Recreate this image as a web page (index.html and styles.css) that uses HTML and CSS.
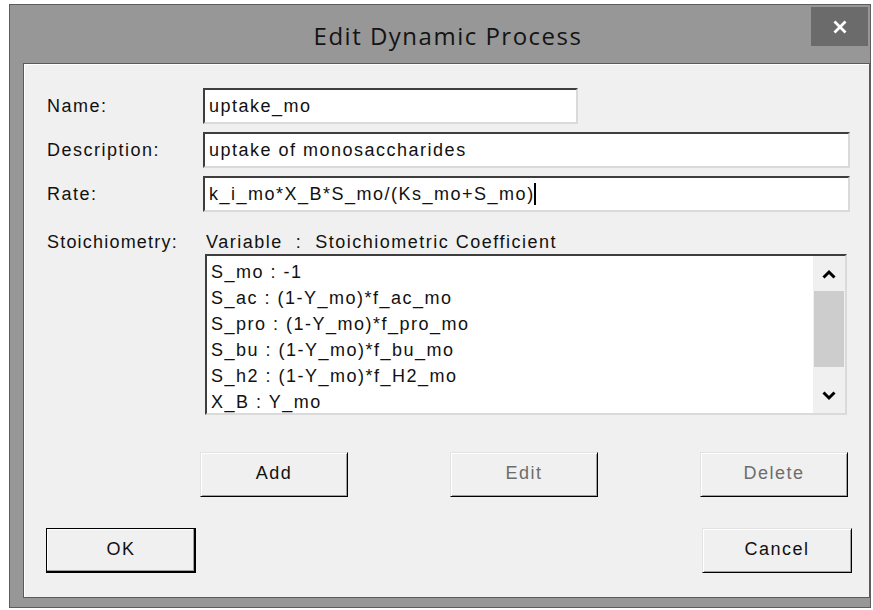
FILE: index.html
```html
<!DOCTYPE html>
<html lang="en">
<head>
<meta charset="utf-8">
<title>Edit Dynamic Process</title>
<link rel="stylesheet" href="styles.css">
</head>
<body>
<div class="window">
  <div class="titlebar">
    <div class="title">Edit Dynamic Process</div>
    <div class="close">
      <svg width="16" height="16" viewBox="0 0 16 16"><path d="M2.5 2.5 L13.5 13.5 M13.5 2.5 L2.5 13.5" stroke="#fff" stroke-width="2.8" fill="none"/></svg>
    </div>
  </div>
  <div class="client">
    <div class="form">
      <div class="lbl">Name:</div>
      <div class="edit name">uptake_mo</div>

      <div class="lbl">Description:</div>
      <div class="edit">uptake of monosaccharides</div>

      <div class="lbl">Rate:</div>
      <div class="edit">k_i_mo*X_B*S_mo/(Ks_mo+S_mo)<span class="caret"></span></div>

      <div class="lbl stoich">Stoichiometry:</div>
      <div class="stoich-col">
        <div class="colhead">Variable  :  Stoichiometric Coefficient</div>
        <div class="listbox">
          <ul class="items">
            <li>S_mo : -1</li>
            <li>S_ac : (1-Y_mo)*f_ac_mo</li>
            <li>S_pro : (1-Y_mo)*f_pro_mo</li>
            <li>S_bu : (1-Y_mo)*f_bu_mo</li>
            <li>S_h2 : (1-Y_mo)*f_H2_mo</li>
            <li>X_B : Y_mo</li>
          </ul>
          <div class="vscroll">
            <div class="arrow">
              <svg width="14" height="10" viewBox="0 0 14 10"><polyline points="1.5,8.5 7,3 12.5,8.5" stroke="#000" stroke-width="3" fill="none"/></svg>
            </div>
            <div class="thumb"></div>
            <div class="track"></div>
            <div class="arrow">
              <svg width="14" height="10" viewBox="0 0 14 10"><polyline points="1.5,1.5 7,7 12.5,1.5" stroke="#000" stroke-width="3" fill="none"/></svg>
            </div>
          </div>
        </div>
        <div class="list-buttons">
          <div class="btn">Add</div>
          <div class="btn disabled">Edit</div>
          <div class="btn disabled">Delete</div>
        </div>
      </div>
    </div>
    <div class="dialog-buttons">
      <div class="btn default">OK</div>
      <div class="btn cancel">Cancel</div>
    </div>
  </div>
</div>
</body>
</html>
```

FILE: styles.css
```css
html, body {
  margin: 0;
  padding: 0;
  background: #fff;
}

body {
  font-family: "Liberation Sans", Arial, sans-serif;
  color: #111;
}

/* outer window frame */
.window {
  margin: 4px 0 0 9px;
  width: 862px;
  height: 604px;
  box-sizing: border-box;
  background: #979797;
  border: 1px solid #5c5c5c;
  display: flex;
  flex-direction: column;
}

.titlebar {
  position: relative;
  height: 58px;
  flex: none;
}

.title {
  padding: 18px 0 0 16px;
  text-align: center;
  font-family: "Open Sans", "Noto Sans", sans-serif;
  font-size: 24px;
  letter-spacing: 1.5px;
  line-height: 26px;
  color: #141414;
}

.close {
  position: absolute;
  top: 2px;
  right: 2px;
  width: 57px;
  height: 39px;
  background: #6b6b6b;
  display: flex;
  align-items: center;
  justify-content: center;
}

/* dialog client area */
.client {
  flex: 1;
  margin: 0 0 9px 13px;
  background: #f0f0f0;
  border: 1px solid #5a5a5a;
  box-shadow: inset 1px 1px #fff;
  padding: 24px 19px 0 23px;
  display: flex;
  flex-direction: column;
  font-size: 18px;
  letter-spacing: 1.5px;
}

.form {
  display: grid;
  grid-template-columns: 156px 1fr;
  row-gap: 8px;
}

.lbl {
  display: flex;
  align-items: center;
  line-height: 24px;
  white-space: nowrap;
}

.lbl.stoich {
  align-self: start;
  margin-top: 10px;
  letter-spacing: 1.2px;
}

.edit {
  height: 36px;
  box-sizing: border-box;
  background: #fff;
  border: 2px solid;
  border-color: #3e3e3e #dadada #dadada #3e3e3e;
  padding: 0 4px;
  line-height: 32px;
  white-space: nowrap;
  overflow: hidden;
}

.edit.name {
  width: 375px;
}

.caret {
  display: inline-block;
  width: 2px;
  height: 22px;
  background: #000;
  vertical-align: middle;
  margin-left: -1px;
  margin-top: -3px;
}

.stoich-col {
  margin-top: 10px;
  display: flex;
  flex-direction: column;
}

.colhead {
  line-height: 24px;
  padding-left: 3px;
  white-space: pre;
}

.listbox {
  margin-left: 2px;
  width: 642px;
  height: 161px;
  box-sizing: border-box;
  background: #fff;
  border: 2px solid;
  border-color: #3e3e3e #dadada #dadada #3e3e3e;
  display: flex;
}

.items {
  flex: 1;
  list-style: none;
  margin: 0;
  padding: 3px 0 0 4px;
  overflow: hidden;
}

.items li {
  line-height: 26px;
  white-space: nowrap;
}

.vscroll {
  width: 32px;
  background: #f0f0f0;
  display: flex;
  flex-direction: column;
}

.vscroll .arrow {
  height: 35px;
  display: flex;
  align-items: center;
  justify-content: center;
}

.vscroll .thumb {
  height: 76px;
  margin: 0 1px;
  background: #cdcdcd;
}

.vscroll .track {
  flex: 1;
}

/* push buttons */
.btn {
  width: 148px;
  height: 45px;
  box-sizing: border-box;
  border: 1px solid;
  border-color: #e3e3e3 #000 #000 #e3e3e3;
  box-shadow: inset 1px 1px #fff, inset -1px -1px #a0a0a0;
  display: flex;
  align-items: center;
  justify-content: center;
  padding-bottom: 3px;
}

.btn.disabled {
  color: #6d6d6d;
}

.btn.default {
  width: 150px;
  border-color: #000;
  box-shadow: inset -1px -1px #000, inset -2px -2px #a0a0a0, inset 1px 1px #fff;
}

.btn.cancel {
  width: 150px;
}

.list-buttons {
  margin: 37px 2px 0 -3px;
  display: flex;
  justify-content: space-between;
}

.dialog-buttons {
  margin: 31px -2px 0 -1px;
  display: flex;
  justify-content: space-between;
}
```
